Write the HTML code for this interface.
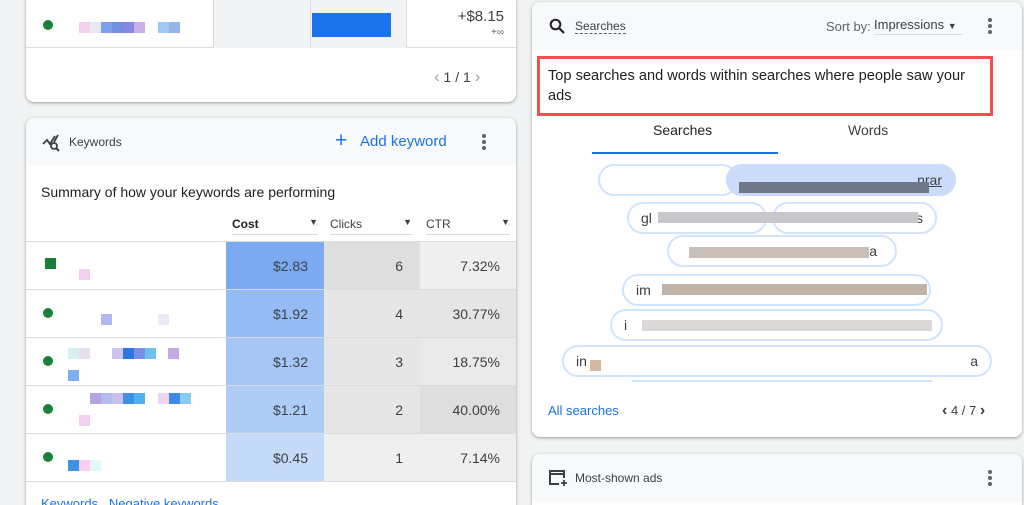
<!DOCTYPE html>
<html style="width:1024px;height:505px;overflow:hidden"><head><style>
*{box-sizing:border-box;margin:0;padding:0}
body{width:1024px;height:505px;background:#f1f3f4;font-family:"Liberation Sans",sans-serif;position:relative;overflow:hidden;color:#202124}
.abs{position:absolute}
.card{position:absolute;background:#fff;border-radius:8px;box-shadow:0 1px 2px rgba(60,64,67,.3),0 1px 3px 1px rgba(60,64,67,.15);overflow:hidden}
.px{position:absolute;width:11px;height:11px}
.dot{position:absolute;width:10px;height:10px;border-radius:50%;background:#188038}
.pill{position:absolute;height:32px;border:2px solid #d2e3fc;border-radius:16px;background:#fff;font-size:14px;color:#3c4043;line-height:28px;padding-left:12px}
.num{position:absolute;font-size:14px;color:#3c4043;text-align:right}
.kebab{position:absolute;width:4px}
.kebab i{display:block;width:4px;height:4px;border-radius:50%;background:#5f6368;margin-bottom:2px}
</style></head><body>

<div class="card" style="left:26px;top:-8px;width:490px;height:110px">
  <div class="abs" style="left:0;top:8px;width:490px;height:48px;border-bottom:1px solid #dadce0"></div>
  <div class="abs" style="left:187px;top:8px;width:98px;height:48px;background:#f1f3f4;border-left:1px solid #dadce0;border-right:1px solid #dadce0"></div>
  <div class="abs" style="left:285px;top:8px;width:96px;height:48px;background:#f1f3f4;border-right:1px solid #dadce0"></div>
  <div class="abs" style="left:286px;top:21px;width:79px;height:24px;background:#1a73e8"></div>
  <div class="dot" style="left:17px;top:28px"></div>
  <div class="px" style="left:53px;top:30px;background:#f0d0ec"></div><div class="px" style="left:64px;top:30px;background:#e8eaf0"></div>
  <div class="px" style="left:75px;top:30px;background:#7f9fee"></div><div class="px" style="left:86px;top:30px;background:#7090e0"></div><div class="px" style="left:97px;top:30px;background:#8888e4"></div><div class="px" style="left:108px;top:30px;background:#c6b0ea"></div>
  <div class="px" style="left:132px;top:30px;background:#a0c8f6"></div><div class="px" style="left:143px;top:30px;background:#94b4ea"></div>
  <div class="num" style="right:12px;top:16px;font-size:15px">+$8.15</div>
  <div class="num" style="right:12px;top:35px;font-size:10px;color:#5f6368">+∞</div>
  <div class="abs" style="left:408px;top:75px;font-size:14px;color:#3c4043"><span style="color:#9aa0a6;font-size:17px">‹</span> 1 / 1 <span style="color:#9aa0a6;font-size:17px">›</span></div>
</div>

<div class="card" style="left:26px;top:118px;width:490px;height:420px">
  <div class="abs" style="left:0;top:0;width:490px;height:47px;background:#f8f9fa"></div>
  <svg class="abs" style="left:16px;top:16px" width="20" height="18" viewBox="0 0 20 18"><path d="M1 10 L5 6 L8 10 L13 2 M16 1 L12 8" stroke="#3c4043" stroke-width="1.8" fill="none"/><circle cx="12" cy="12" r="3" stroke="#3c4043" stroke-width="1.8" fill="none"/><path d="M14 14 L17 17" stroke="#3c4043" stroke-width="2"/></svg>
  <div class="abs" style="left:43px;top:17px;font-size:12px;color:#3c4043">Keywords</div>
  <div class="abs" style="left:309px;top:11px;font-size:21px;color:#1a73e8">+</div>
  <div class="abs" style="left:334px;top:15px;font-size:15px;color:#1a73e8">Add keyword</div>
  <div class="kebab" style="left:456px;top:16px"><i></i><i></i><i></i></div>
  <div class="abs" style="left:15px;top:66px;font-size:14px;color:#202124">Summary of how your keywords are performing</div>
  <div class="abs" style="left:206px;top:99px;width:86px;border-bottom:1px solid #dadce0;font-size:12px;font-weight:bold;height:18px">Cost<span style="float:right;font-size:9px;color:#3c4043">▼</span></div>
  <div class="abs" style="left:304px;top:99px;width:82px;border-bottom:1px solid #dadce0;font-size:12px;color:#3c4043;height:18px">Clicks<span style="float:right;font-size:9px">▼</span></div>
  <div class="abs" style="left:400px;top:99px;width:84px;border-bottom:1px solid #dadce0;font-size:12px;color:#3c4043;height:18px">CTR<span style="float:right;font-size:9px">▼</span></div>
  <div class="abs" style="left:0;top:123px;width:490px;border-top:1px solid #dadce0"></div>
  <div class="abs" style="left:15px;top:378px;font-size:13px;color:#1a73e8">Keywords &nbsp; Negative keywords</div>
</div>
<div class="abs" style="left:26px;top:242px;width:490px;height:240px;background:#fff"></div>
<div class="abs" style="left:226px;top:242px;width:98px;height:48px;background:#7baaf0"></div>
<div class="abs" style="left:226px;top:290px;width:98px;height:48px;background:#94bbf4"></div>
<div class="abs" style="left:226px;top:338px;width:98px;height:48px;background:#a6c7f5"></div>
<div class="abs" style="left:226px;top:386px;width:98px;height:48px;background:#aecdf6"></div>
<div class="abs" style="left:226px;top:434px;width:98px;height:48px;background:#c5daf8"></div>
<div class="abs" style="left:324px;top:242px;width:96px;height:48px;background:#dedede"></div>
<div class="abs" style="left:324px;top:290px;width:96px;height:144px;background:#e6e6e6"></div>
<div class="abs" style="left:324px;top:434px;width:96px;height:48px;background:#efefef"></div>
<div class="abs" style="left:420px;top:242px;width:96px;height:48px;background:#efefef"></div>
<div class="abs" style="left:420px;top:290px;width:96px;height:48px;background:#e5e5e5"></div>
<div class="abs" style="left:420px;top:338px;width:96px;height:48px;background:#eaeaea"></div>
<div class="abs" style="left:420px;top:386px;width:96px;height:48px;background:#dedede"></div>
<div class="abs" style="left:420px;top:434px;width:96px;height:48px;background:#efefef"></div>
<div class="abs" style="left:26px;top:289px;width:490px;border-top:1px solid #dadce0"></div>
<div class="abs" style="left:26px;top:337px;width:490px;border-top:1px solid #dadce0"></div>
<div class="abs" style="left:26px;top:385px;width:490px;border-top:1px solid #dadce0"></div>
<div class="abs" style="left:26px;top:433px;width:490px;border-top:1px solid #dadce0"></div>
<div class="abs" style="left:26px;top:481px;width:490px;border-top:1px solid #dadce0"></div>

<div class="px" style="left:45px;top:258px;background:#188038"></div>
<div class="px" style="left:79px;top:269px;background:#f4cfec"></div>
<div class="dot" style="left:43px;top:308px"></div>
<div class="px" style="left:101px;top:314px;background:#b0b8ec"></div><div class="px" style="left:158px;top:314px;background:#efe8f6"></div>
<div class="dot" style="left:43px;top:356px"></div>
<div class="px" style="left:68px;top:348px;background:#d6f0f2"></div><div class="px" style="left:79px;top:348px;background:#e6e0ee"></div><div class="px" style="left:112px;top:348px;background:#ccc4ee"></div><div class="px" style="left:123px;top:348px;background:#2a78e6"></div><div class="px" style="left:134px;top:348px;background:#7890e8"></div><div class="px" style="left:145px;top:348px;background:#70c0f2"></div><div class="px" style="left:168px;top:348px;background:#c6a8e6"></div>
<div class="px" style="left:68px;top:370px;background:#7eaef2"></div>
<div class="dot" style="left:43px;top:404px"></div>
<div class="px" style="left:90px;top:393px;background:#b4a4e6"></div><div class="px" style="left:101px;top:393px;background:#b4bcee"></div><div class="px" style="left:112px;top:393px;background:#c8c0ec"></div><div class="px" style="left:123px;top:393px;background:#4090e8"></div><div class="px" style="left:134px;top:393px;background:#52b0f0"></div><div class="px" style="left:158px;top:393px;background:#efd6f0"></div><div class="px" style="left:169px;top:393px;background:#3a8ce8"></div><div class="px" style="left:180px;top:393px;background:#88ccf4"></div>
<div class="px" style="left:79px;top:415px;background:#f2d0ee"></div>
<div class="dot" style="left:43px;top:452px"></div>
<div class="px" style="left:68px;top:460px;background:#4090e8"></div><div class="px" style="left:79px;top:460px;background:#f8d0ee"></div><div class="px" style="left:90px;top:460px;background:#e4fafa"></div>

<div class="num" style="left:226px;width:82px;top:258px">$2.83</div>
<div class="num" style="left:226px;width:82px;top:306px">$1.92</div>
<div class="num" style="left:226px;width:82px;top:354px">$1.32</div>
<div class="num" style="left:226px;width:82px;top:402px">$1.21</div>
<div class="num" style="left:226px;width:82px;top:450px">$0.45</div>
<div class="num" style="left:324px;width:79px;top:258px">6</div>
<div class="num" style="left:324px;width:79px;top:306px">4</div>
<div class="num" style="left:324px;width:79px;top:354px">3</div>
<div class="num" style="left:324px;width:79px;top:402px">2</div>
<div class="num" style="left:324px;width:79px;top:450px">1</div>
<div class="num" style="left:420px;width:80px;top:258px">7.32%</div>
<div class="num" style="left:420px;width:80px;top:306px">30.77%</div>
<div class="num" style="left:420px;width:80px;top:354px">18.75%</div>
<div class="num" style="left:420px;width:80px;top:402px">40.00%</div>
<div class="num" style="left:420px;width:80px;top:450px">7.14%</div>

<div class="card" style="left:532px;top:2px;width:490px;height:435px">
  <div class="abs" style="left:0;top:0;width:490px;height:48px;background:#f8f9fa"></div>
  <svg class="abs" style="left:17px;top:16px" width="16" height="16" viewBox="0 0 16 16"><circle cx="6.5" cy="6.5" r="4.8" stroke="#202124" stroke-width="2" fill="none"/><path d="M10 10 L15 15" stroke="#202124" stroke-width="2.2"/></svg>
  <div class="abs" style="left:43px;top:17px;font-size:12px;color:#3c4043;border-bottom:1px dashed #5f6368">Searches</div>
  <div class="abs" style="left:294px;top:17px;font-size:13px;color:#5f6368">Sort by:</div>
  <div class="abs" style="left:342px;top:15px;width:89px;height:18px;font-size:13px;color:#3c4043;border-bottom:1px solid #dadce0">Impressions <span style="font-size:9px">▼</span></div>
  <div class="kebab" style="left:456px;top:16px"><i></i><i></i><i></i></div>
  <div class="abs" style="left:5px;top:54px;width:456px;height:60px;border:3px solid #f05050"></div>
  <div class="abs" style="left:16px;top:64px;width:440px;font-size:14.6px;line-height:20px;color:#202124">Top searches and words within searches where people saw your ads</div>
  <div class="abs" style="left:121px;top:120px;font-size:14px;color:#202124">Searches</div>
  <div class="abs" style="left:316px;top:120px;font-size:14px;color:#3c4043">Words</div>
  <div class="abs" style="left:60px;top:150px;width:186px;height:2px;background:#1a73e8"></div>

  <div class="pill" style="left:66px;top:162px;width:140px"></div>
  <div class="pill" style="left:194px;top:162px;width:230px;background:#cadcfa;border-color:#cadcfa;text-align:right;padding-right:12px;text-decoration:underline">nrar</div>
  <div class="abs" style="left:207px;top:180px;width:190px;height:11px;background:#707888"></div>
  <div class="pill" style="left:95px;top:200px;width:140px">gl</div>
  <div class="pill" style="left:240px;top:200px;width:165px;text-align:right;padding-right:12px">es</div>
  <div class="abs" style="left:126px;top:210px;width:260px;height:11px;background:#c8c8cc"></div>
  <div class="pill" style="left:135px;top:233px;width:230px;text-align:right;padding-right:18px">a</div>
  <div class="abs" style="left:157px;top:245px;width:180px;height:11px;background:#c8c0b8"></div>
  <div class="pill" style="left:90px;top:272px;width:309px">im</div>
  <div class="abs" style="left:130px;top:282px;width:265px;height:11px;background:#c0b4a8"></div>
  <div class="pill" style="left:78px;top:307px;width:333px">i</div>
  <div class="abs" style="left:110px;top:318px;width:290px;height:11px;background:#dcd8d8"></div>
  <div class="pill" style="left:30px;top:343px;width:430px;padding-right:12px">in<span style="float:right">a</span></div>
  <div class="px" style="left:58px;top:358px;background:#d4b8a0"></div>
  <div class="abs" style="left:100px;top:378px;width:300px;height:6px;border-top:2px solid #d2e3fc"></div>
  <div class="abs" style="left:16px;top:401px;font-size:13px;color:#1a73e8">All searches</div>
  <div class="abs" style="left:410px;top:400px;font-size:13px;color:#3c4043"><b style="font-size:16px">‹</b> 4 / 7 <b style="font-size:16px">›</b></div>
</div>

<div class="card" style="left:532px;top:454px;width:490px;height:70px">
  <div class="abs" style="left:0;top:0;width:490px;height:48px;background:#f8f9fa"></div>
  <svg class="abs" style="left:16px;top:15px" width="20" height="18" viewBox="0 0 20 18"><path d="M11 15 H2 V2 H16 V9" stroke="#3c4043" stroke-width="2" fill="none"/><path d="M2 5 H16" stroke="#3c4043" stroke-width="2"/><path d="M13 14 H19 M16 11 V17" stroke="#3c4043" stroke-width="1.8"/></svg>
  <div class="abs" style="left:43px;top:17px;font-size:12px;color:#3c4043">Most-shown ads</div>
  <div class="kebab" style="left:456px;top:16px"><i></i><i></i><i></i></div>
</div>
</body></html>
